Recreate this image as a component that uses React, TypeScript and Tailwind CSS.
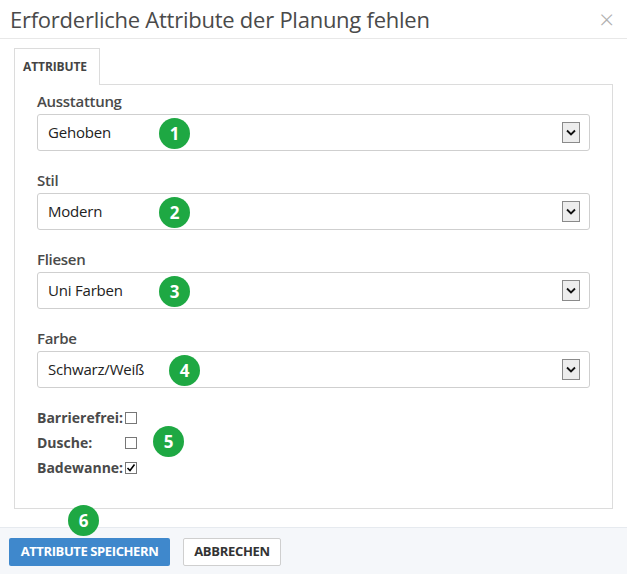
import React from 'react';

const fields = [
  { label: 'Ausstattung', value: 'Gehoben', badge: 1, badgeLeft: 'left-[121px]' },
  { label: 'Stil', value: 'Modern', badge: 2, badgeLeft: 'left-[121px]' },
  { label: 'Fliesen', value: 'Uni Farben', badge: 3, badgeLeft: 'left-[121px]' },
  { label: 'Farbe', value: 'Schwarz/Weiß', badge: 4, badgeLeft: 'left-[131px]' },
];

const checks = [
  { label: 'Barrierefrei:', checked: false },
  { label: 'Dusche:', checked: false },
  { label: 'Badewanne:', checked: true },
];

function Badge({ n, className = '' }: { n: number; className?: string }) {
  return (
    <div
      className={`absolute w-[31px] h-[31px] rounded-full bg-[#1ea843] text-white text-[17px] font-bold flex items-center justify-center leading-none ${className}`}
    >
      {n}
    </div>
  );
}

function SelectBox({ value, badge, badgeLeft }: { value: string; badge: number; badgeLeft: string }) {
  return (
    <div className="relative h-[37px] border border-[#cfcfcf] rounded-[3px] bg-white flex items-center pl-[10px] pr-[9px]">
      <span className="flex-1 text-[15px] text-[#222] tracking-[-0.2px]">{value}</span>
      {/* native-looking arrow box */}
      <div className="w-[18px] h-[21px] border border-[#8a8a8a] bg-[#ededed] flex items-center justify-center">
        <svg width="10" height="7" viewBox="0 0 10 7">
          <path d="M1 1.5 L5 5.5 L9 1.5" fill="none" stroke="#111" strokeWidth="1.8" />
        </svg>
      </div>
      <Badge n={badge} className={`${badgeLeft} top-[3px]`} />
    </div>
  );
}

function CheckBox({ checked }: { checked: boolean }) {
  return (
    <div className="w-[12px] h-[12px] border border-[#777] bg-white flex items-center justify-center">
      {checked && (
        <svg width="10" height="10" viewBox="0 0 10 10">
          <path d="M1.5 5 L4 7.5 L8.5 1.5" fill="none" stroke="#000" strokeWidth="1.6" />
        </svg>
      )}
    </div>
  );
}

export default function App() {
  return (
    <div className="w-[627px] h-[574px] bg-white flex flex-col font-['Open_Sans',sans-serif] text-[#444]">
      {/* Header */}
      <div className="h-[39px] border-b border-[#e8e8e8] pl-[10px] pr-[13px] flex items-center justify-between">
        <h1 className="text-[22px] text-[#4a4a4a] leading-none tracking-[-0.25px]">
          Erforderliche Attribute der Planung fehlen
        </h1>
        <span className="text-[26px] font-light text-[#b0b0b0] leading-none">×</span>
      </div>

      {/* Body */}
      <div className="px-[14px] pt-[9px]">
        <div className="flex">
          <div className="relative z-10 -mb-px w-[86px] h-[37px] border border-b-0 border-[#dcdcdc] bg-white flex items-center pl-[8px]">
            <span className="text-[12px] font-bold text-[#444] tracking-[-0.1px]">ATTRIBUTE</span>
          </div>
        </div>
        <div className="h-[425px] border border-[#dcdcdc] px-[22px] pt-[4px]">
          <div className="flex flex-col gap-[17px]">
            {fields.map((f) => (
              <div key={f.label} className="flex flex-col">
                <label className="h-[25px] flex items-center text-[15px] font-semibold text-[#4a4a4a] tracking-[-0.3px]">
                  {f.label}
                </label>
                <SelectBox value={f.value} badge={f.badge} badgeLeft={f.badgeLeft} />
              </div>
            ))}
          </div>
          <div className="relative mt-[17px]">
            <div className="grid grid-cols-[auto_auto] w-max items-center text-[14px] font-bold text-[#4a4a4a]">
              {checks.map((c) => (
                <React.Fragment key={c.label}>
                  <span className="h-[25px] flex items-center pr-[2px]">{c.label}</span>
                  <CheckBox checked={c.checked} />
                </React.Fragment>
              ))}
            </div>
            <Badge n={5} className="left-[116px] top-[21px]" />
          </div>
        </div>
      </div>

      {/* Footer */}
      <div className="relative mt-[18px] flex-1 bg-[#f5f7fa] border-t border-[#e6eaef] pl-[9px] pt-[10px] flex gap-[13px] items-start">
        <Badge n={6} className="left-[68px] top-[-23px]" />
        <button className="h-[28px] w-[161px] rounded-[2px] bg-[#3f88cc] text-white text-[13px] font-bold tracking-[-0.4px]">
          ATTRIBUTE SPEICHERN
        </button>
        <button className="h-[28px] w-[98px] rounded-[2px] bg-white border border-[#cfcfcf] text-[#333] text-[13px] font-bold tracking-[-0.3px]">
          ABBRECHEN
        </button>
      </div>
    </div>
  );
}
